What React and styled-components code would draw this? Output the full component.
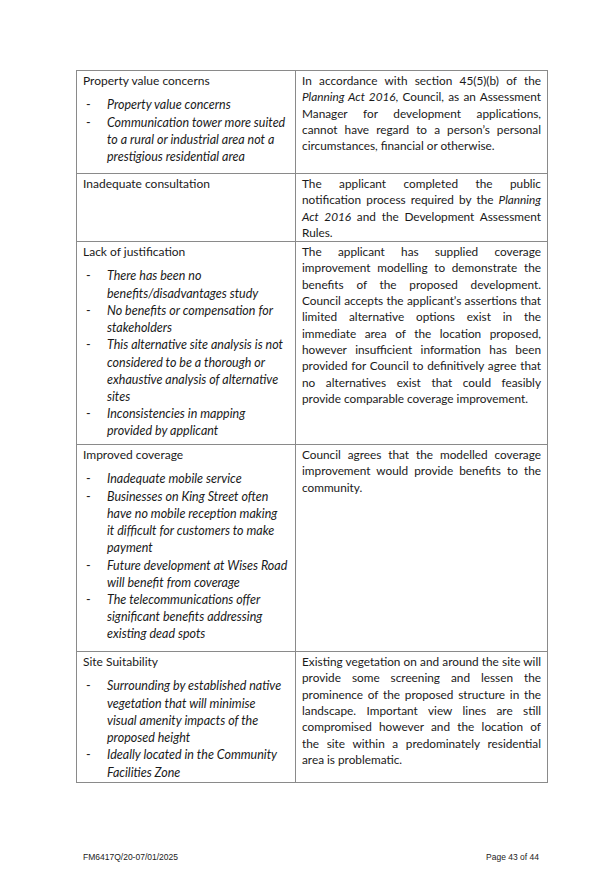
import React from 'react';
import styled, { createGlobalStyle } from 'styled-components';

const GlobalStyle = createGlobalStyle`
  html, body {
    margin: 0;
    padding: 0;
    background: #ffffff;
  }
  body {
    font-family: Lato, "Open Sans", sans-serif;
    color: #1a1a1a;
  }
`

const Page = styled.div`
  width: 599px;
  min-height: 869px;
  box-sizing: border-box;
  padding: 70px 0 0 76px;
  background: #ffffff;
`

const Table = styled.table`
  width: 471px;
  border-collapse: collapse;
  border: 1.5px solid #6e6e6e;
  table-layout: fixed;
`

const Row = styled.tr`
  height: ${p => p.$h}px;
`

const Cell = styled.td`
  width: ${p => p.$w}px;
  vertical-align: top;
  padding: 2px 6px 0 6px;
  border: 1px solid #8a8a8a;
  box-sizing: border-box;
`

const Heading = styled.div`
  font-size: 12px;
  line-height: 16.3px;
  margin-bottom: 7px;
  white-space: nowrap;
`

const Bullets = styled.ul`
  list-style: none;
  margin: 0;
  padding: 0;
`

const Bullet = styled.li`
  display: grid;
  grid-template-columns: 24px 1fr;
  font-size: 12.5px;
  line-height: 17.2px;
  font-style: italic;
  white-space: nowrap;
  &::before {
    content: '-';
    font-style: normal;
    padding-left: 3px;
  }
`

const Para = styled.div`
  font-size: 11.8px;
  line-height: 16.3px;
`

const Line = styled.span`
  display: block;
  text-align: justify;
  text-align-last: ${p => (p.$last ? 'left' : 'justify')};
  white-space: nowrap;
`

const Footer = styled.div`
  display: flex;
  justify-content: space-between;
  width: 456px;
  margin: 69px 0 0 7px;
  font-family: "Liberation Sans", Arial, sans-serif;
  font-size: 8.5px;
  color: #222222;
`

const Justified = ({ lines }) => (
  <Para>
    {lines.map((l, i) => (
      <Line key={i} $last={i === lines.length - 1}>{l}</Line>
    ))}
  </Para>
)

const Issue = ({ title, items }) => (
  <>
    <Heading>{title}</Heading>
    {items && (
      <Bullets>
        {items.map((it, i) => (
          <Bullet key={i}>
            <span>
              {it.map((l, j) => (
                <React.Fragment key={j}>
                  {j > 0 && <br />}
                  {l}
                </React.Fragment>
              ))}
            </span>
          </Bullet>
        ))}
      </Bullets>
    )}
  </>
)

const rows = [
  {
    h: 103,
    title: 'Property value concerns',
    items: [
      ['Property value concerns'],
      ['Communication tower more suited', 'to a rural or industrial area not a', 'prestigious residential area'],
    ],
    answer: [
      'In accordance with section 45(5)(b) of the',
      <><i>Planning Act 2016</i>, Council, as an Assessment</>,
      'Manager for development applications,',
      'cannot have regard to a person\u2019s personal',
      'circumstances, financial or otherwise.',
    ],
  },
  {
    h: 67,
    title: 'Inadequate consultation',
    answer: [
      'The applicant completed the public',
      <>notification process required by the <i>Planning</i></>,
      <><i>Act 2016</i> and the Development Assessment</>,
      'Rules.',
    ],
  },
  {
    h: 203,
    title: 'Lack of justification',
    items: [
      ['There has been no', 'benefits/disadvantages study'],
      ['No benefits or compensation for', 'stakeholders'],
      ['This alternative site analysis is not', 'considered to be a thorough or', 'exhaustive analysis of alternative', 'sites'],
      ['Inconsistencies in mapping', 'provided by applicant'],
    ],
    answer: [
      'The applicant has supplied coverage',
      'improvement modelling to demonstrate the',
      'benefits of the proposed development.',
      'Council accepts the applicant\u2019s assertions that',
      'limited alternative options exist in the',
      'immediate area of the location proposed,',
      'however insufficient information has been',
      'provided for Council to definitively agree that',
      'no alternatives exist that could feasibly',
      'provide comparable coverage improvement.',
    ],
  },
  {
    h: 207,
    title: 'Improved coverage',
    items: [
      ['Inadequate mobile service'],
      ['Businesses on King Street often', 'have no mobile reception making', 'it difficult for customers to make', 'payment'],
      ['Future development at Wises Road', 'will benefit from coverage'],
      ['The telecommunications offer', 'significant benefits addressing', 'existing dead spots'],
    ],
    answer: [
      'Council agrees that the modelled coverage',
      'improvement would provide benefits to the',
      'community.',
    ],
  },
  {
    h: 131,
    title: 'Site Suitability',
    items: [
      ['Surrounding by established native', 'vegetation that will minimise', 'visual amenity impacts of the', 'proposed height'],
      ['Ideally located in the Community', 'Facilities Zone'],
    ],
    answer: [
      'Existing vegetation on and around the site will',
      'provide some screening and lessen the',
      'prominence of the proposed structure in the',
      'landscape. Important view lines are still',
      'compromised however and the location of',
      'the site within a predominately residential',
      'area is problematic.',
    ],
  },
]

export default function App() {
  return (
    <Page>
      <GlobalStyle />
      <Table>
        <tbody>
          {rows.map((r, i) => (
            <Row key={i} $h={r.h}>
              <Cell $w={219}>
                <Issue title={r.title} items={r.items} />
              </Cell>
              <Cell $w={252}>
                <Justified lines={r.answer} />
              </Cell>
            </Row>
          ))}
        </tbody>
      </Table>
      <Footer>
        <span>FM6417Q/20-07/01/2025</span>
        <span>Page 43 of 44</span>
      </Footer>
    </Page>
  )
}
